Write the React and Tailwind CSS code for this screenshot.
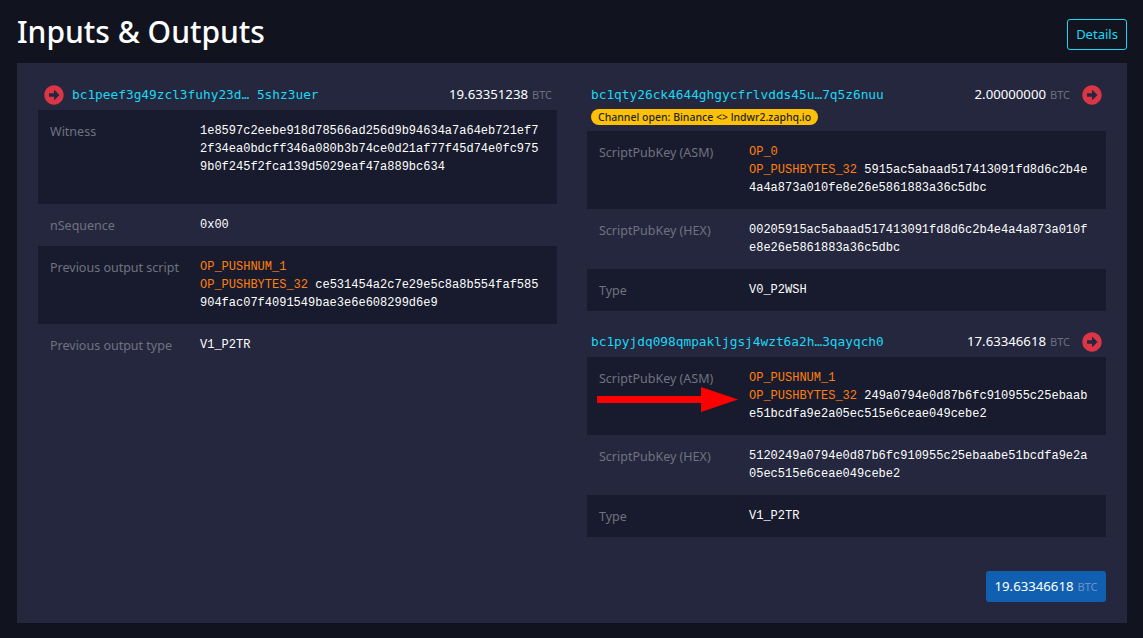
import React from "react";
import { FaArrowAltCircleRight } from "react-icons/fa";

const Op = ({ children }) => <span className="text-[#ff7f0e]">{children}</span>;

const Row = ({ label, children, dark, className = "" }) => (
  <div className={`relative flex px-3 py-3 ${dark ? "bg-[#181b2d]" : ""} ${className}`}>
    <div className="h-[18px] w-[150px] shrink-0 text-[12.5px] leading-[20px] text-[#6f7380]">{label}</div>
    <div className="min-w-0 flex-1 break-all font-['Liberation_Mono',monospace] text-[12px] leading-[18px] text-white">
      {children}
    </div>
  </div>
);

const Amount = ({ value }) => (
  <span className="flex items-baseline gap-[4px] text-[13.2px] leading-none text-white">
    {value} <span className="text-[11px] text-[#6c7080]">BTC</span>
  </span>
);

const Addr = ({ children }) => (
  <span className="font-['DejaVu_Sans_Mono',monospace] text-[12.8px] leading-none text-[#1bd8f4]">{children}</span>
);

const Bullet = () => <FaArrowAltCircleRight className="text-[20px] text-[#dc3545]" />;

export default function App() {
  return (
    <div className="min-h-screen bg-[#11131f] pl-[17px] pr-[16px] pt-[19px] pb-[15px] font-['Noto_Sans',sans-serif]">
      <div className="flex h-[44px] items-start justify-between">
        <h1 className="-mt-[4px] text-[30px] font-medium leading-[34px] text-white">Inputs &amp; Outputs</h1>
        <button className="h-[31px] w-[60px] rounded-[3px] border border-[#1bd8f4] text-[13px] text-[#1bd8f4]">
          Details
        </button>
      </div>

      <div className="h-[560px] bg-[#24273e] px-[21px] pt-[21px]">
        <div className="flex gap-[30px]">
          <div className="w-[519px]">
            <div className="flex h-[26px] items-center gap-[8px] pb-[4px] pl-[6px] pr-[5px]">
              <Bullet />
              <Addr>bc1peef3g49zcl3fuhy23d… 5shz3uer</Addr>
              <span className="ml-auto"><Amount value="19.63351238" /></span>
            </div>
            <Row label="Witness" dark className="h-[94px]">
              1e8597c2eebe918d78566ad256d9b94634a7a64eb721ef72f34ea0bdcff346a080b3b74ce0d21af77f45d74e0fc9759b0f245f2fca139d5029eaf47a889bc634
            </Row>
            <Row label="nSequence">0x00</Row>
            <Row label="Previous output script" dark>
              <Op>OP_PUSHNUM_1</Op>
              <br />
              <Op>OP_PUSHBYTES_32</Op> ce531454a2c7e29e5c8a8b554faf585904fac07f4091549bae3e6e608299d6e9
            </Row>
            <Row label="Previous output type">V1_P2TR</Row>
          </div>

          <div className="w-[519px]">
            <div className="flex h-[26px] items-center pb-[4px] pl-[4px] pr-[4px]">
              <Addr>bc1qty26ck4644ghgycfrlvdds45u…7q5z6nuu</Addr>
              <span className="ml-auto mr-[12px]"><Amount value="2.00000000" /></span>
              <Bullet />
            </div>
            <div className="flex h-[21px] items-start pl-[4px]">
              <span className="-mt-px h-[16px] rounded-full bg-[#ffc107] px-[7px] text-[10.5px] font-medium leading-[16px] text-[#212529]">
                Channel open: Binance &lt;&gt; lndwr2.zaphq.io
              </span>
            </div>
            <Row label="ScriptPubKey (ASM)" dark>
              <Op>OP_0</Op>
              <br />
              <Op>OP_PUSHBYTES_32</Op> 5915ac5abaad517413091fd8d6c2b4e4a4a873a010fe8e26e5861883a36c5dbc
            </Row>
            <Row label="ScriptPubKey (HEX)">
              00205915ac5abaad517413091fd8d6c2b4e4a4a873a010fe8e26e5861883a36c5dbc
            </Row>
            <Row label="Type" dark>V0_P2WSH</Row>

            <div className="mt-[20px] flex h-[26px] items-center pb-[4px] pl-[4px] pr-[4px]">
              <Addr>bc1pyjdq098qmpakljgsj4wzt6a2h…3qayqch0</Addr>
              <span className="ml-auto mr-[12px]"><Amount value="17.63346618" /></span>
              <Bullet />
            </div>
            <Row label="ScriptPubKey (ASM)" dark>
              <Op>OP_PUSHNUM_1</Op>
              <br />
              <Op>OP_PUSHBYTES_32</Op> 249a0794e0d87b6fc910955c25ebaabe51bcdfa9e2a05ec515e6ceae049cebe2
              {/* annotation drawn over the screenshot */}
              <svg className="absolute left-[10px] top-[30px]" width="141" height="25" viewBox="0 0 141 25">
                <path d="M0 9H104V0L141 12.5L104 25V16H0Z" fill="#ff0000" />
              </svg>
            </Row>
            <Row label="ScriptPubKey (HEX)">
              5120249a0794e0d87b6fc910955c25ebaabe51bcdfa9e2a05ec515e6ceae049cebe2
            </Row>
            <Row label="Type" dark>V1_P2TR</Row>

            <div className="mt-[34px] flex justify-end">
              <span className="flex h-[31px] w-[120px] items-center justify-center rounded-[3px] bg-[#105fb0]">
                <span className="flex items-baseline gap-[4px] text-[13.2px] leading-none text-white">
                  19.63346618 <span className="text-[11px] text-[#6f93c9]">BTC</span>
                </span>
              </span>
            </div>
          </div>
        </div>
      </div>
    </div>
  );
}
